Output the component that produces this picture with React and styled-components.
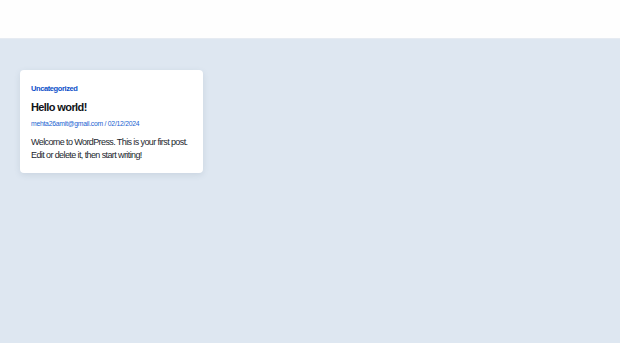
import React from 'react';
import styled, { createGlobalStyle } from 'styled-components';

const GlobalStyle = createGlobalStyle`
  html, body {
    margin: 0;
    padding: 0;
    background: #dee7f1;
    font-family: "Liberation Sans", Arial, sans-serif;
  }
`;

const Page = styled.div`
  min-height: 343px;
  background: #dee7f1;
`;

const Header = styled.header`
  height: 38px;
  background: #fefefe;
  border-bottom: 1px solid #e6ebf2;
`;

const Main = styled.main`
  padding: 31px 20px;
  display: grid;
  grid-template-columns: 183px;
`;

const Card = styled.article`
  background: #ffffff;
  border-radius: 4px;
  box-shadow: 0 2px 6px rgba(60, 80, 110, 0.12);
  padding: 14px 11px 11px;
  display: flex;
  flex-direction: column;
`;

const Category = styled.a`
  color: #0b4fc9;
  font-size: 7.5px;
  letter-spacing: -0.4px;
  font-weight: 700;
  text-decoration: none;
  line-height: 10px;
`;

const Title = styled.h2`
  margin: 6px 0 0;
  font-size: 11px;
  letter-spacing: -0.6px;
  line-height: 14px;
  font-weight: 700;
  color: #111318;
`;

const Meta = styled.div`
  margin-top: 5px;
  font-size: 6.8px;
  letter-spacing: -0.25px;
  line-height: 9px;
  color: #1b5fd1;
`;

const Excerpt = styled.p`
  margin: 8px 0 0;
  font-size: 9px;
  letter-spacing: -0.6px;
  line-height: 13px;
  color: #23272e;
`;

export default function App() {
  return (
    <Page>
      <GlobalStyle />
      <Header />
      <Main>
        <Card>
          <Category href="#">Uncategorized</Category>
          <Title>Hello world!</Title>
          <Meta>mehta26amit@gmail.com / 02/12/2024</Meta>
          <Excerpt>
            Welcome to WordPress. This is your first post. Edit or delete it, then start writing!
          </Excerpt>
        </Card>
      </Main>
    </Page>
  );
}
